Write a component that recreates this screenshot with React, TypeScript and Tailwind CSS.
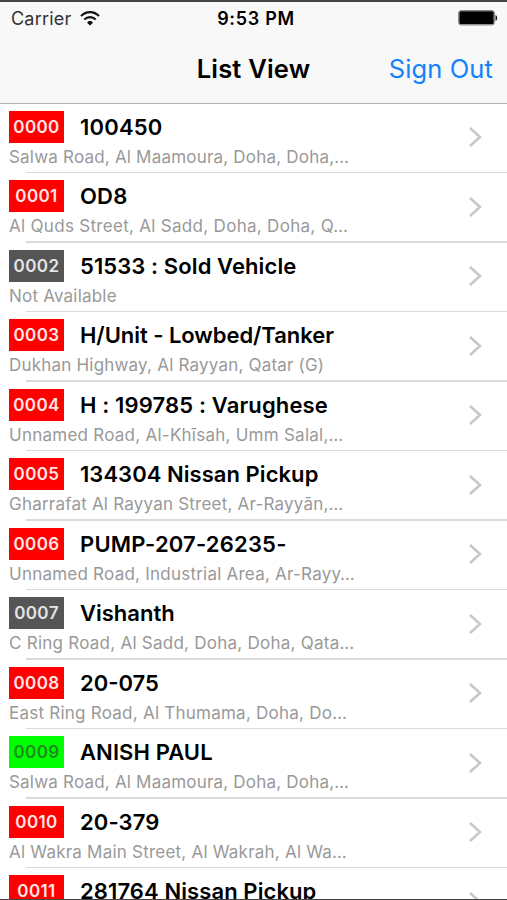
type Row = {
  code: string;
  color: string;
  title: string;
  titleTracking: string;
  place: string;
  placeTracking: string;
};

const RED = "bg-[#ff0000] text-[#ffe6e6]";
const GRAY = "bg-[#555555] text-[#e4e4e4]";
const GREEN = "bg-[#00ff00] text-[#1f8a1f]";

const rows: Row[] = [
  { code: "0000", color: RED, title: "100450", titleTracking: "tracking-[0.2px]", place: "Salwa Road, Al Maamoura, Doha, Doha,…", placeTracking: "tracking-[0.2px]" },
  { code: "0001", color: RED, title: "OD8", titleTracking: "tracking-[0.2px]", place: "Al Quds Street, Al Sadd, Doha, Doha, Q…", placeTracking: "tracking-[0.3px]" },
  { code: "0002", color: GRAY, title: "51533 : Sold Vehicle", titleTracking: "tracking-[0.1px]", place: "Not Available", placeTracking: "tracking-[0.2px]" },
  { code: "0003", color: RED, title: "H/Unit - Lowbed/Tanker", titleTracking: "tracking-[-0.04px]", place: "Dukhan Highway, Al Rayyan, Qatar (G)", placeTracking: "tracking-[0.2px]" },
  { code: "0004", color: RED, title: "H : 199785 : Varughese", titleTracking: "tracking-[0.14px]", place: "Unnamed Road, Al-Khīsah, Umm Salal,…", placeTracking: "tracking-[0.25px]" },
  { code: "0005", color: RED, title: "134304 Nissan Pickup", titleTracking: "tracking-[0.05px]", place: "Gharrafat Al Rayyan Street, Ar-Rayyān,…", placeTracking: "tracking-[0.21px]" },
  { code: "0006", color: RED, title: "PUMP-207-26235-", titleTracking: "tracking-[0.2px]", place: "Unnamed Road, Industrial Area, Ar-Rayy…", placeTracking: "tracking-[0.23px]" },
  { code: "0007", color: GRAY, title: "Vishanth", titleTracking: "tracking-normal", place: "C Ring Road, Al Sadd, Doha, Doha, Qata…", placeTracking: "tracking-[0.25px]" },
  { code: "0008", color: RED, title: "20-075", titleTracking: "tracking-normal", place: "East Ring Road, Al Thumama, Doha, Do…", placeTracking: "tracking-[0.24px]" },
  { code: "0009", color: GREEN, title: "ANISH PAUL", titleTracking: "tracking-[0.1px]", place: "Salwa Road, Al Maamoura, Doha, Doha,…", placeTracking: "tracking-[0.2px]" },
  { code: "0010", color: RED, title: "20-379", titleTracking: "tracking-[0.1px]", place: "Al Wakra Main Street, Al Wakrah, Al Wa…", placeTracking: "tracking-[0.22px]" },
  { code: "0011", color: RED, title: "281764 Nissan Pickup", titleTracking: "tracking-[0.1px]", place: "", placeTracking: "tracking-normal" },
];

function WifiIcon() {
  return (
    <svg className="h-[15px] w-[20px]" viewBox="0 0 20 15" fill="none" stroke="#111" strokeWidth="2.1">
      <path d="M1 5C6 -0.2 14 -0.2 19 5" />
      <path d="M4.3 8.6C7.6 5.3 12.4 5.3 15.7 8.6" />
      <path d="M10 14.4L7.3 11.9C7.3 9.3 12.7 9.3 12.7 11.9Z" fill="#111" stroke="none" />
    </svg>
  );
}

function BatteryIcon() {
  return (
    <svg className="h-[16px] w-[40px]" viewBox="0 0 40 16">
      <rect x="0.5" y="0.5" width="36" height="14.5" rx="2.5" fill="#f8f8f8" stroke="#8a8a8a" />
      <rect x="1.3" y="1.3" width="34.4" height="13" rx="1.5" fill="#000" />
      <path d="M37.5 5C39.7 6 39.7 10 37.5 11Z" fill="#111" />
    </svg>
  );
}

function Chevron() {
  return (
    <svg className="h-[20px] w-[13px]" viewBox="0 0 13 20" fill="none" stroke="#c7c7cc" strokeWidth="2.6">
      <path d="M1 1L11 10L1 19" />
    </svg>
  );
}

function ListRow({ row }: { row: Row }) {
  return (
    <li className="flex h-[69.5px] shrink-0 flex-col">
      <div className="flex min-h-0 flex-1 justify-between pr-[25px] pl-[9px]">
        <div className="flex flex-col pt-[7px]">
          <div className="flex items-center gap-4">
            <span className={`flex h-8 w-[55px] items-center justify-center pt-[2px] text-[17px] font-semibold tracking-[0.4px] ${row.color}`}>
              {row.code}
            </span>
            <span className={`text-[22px] leading-8 font-semibold whitespace-nowrap text-black ${row.titleTracking}`}>{row.title}</span>
          </div>
          <span className={`mt-[3px] text-[17px] leading-[22px] whitespace-nowrap text-[#999999] ${row.placeTracking}`}>{row.place}</span>
        </div>
        <div className="flex pt-[23.5px]">
          <Chevron />
        </div>
      </div>
      <div className="ml-[26px] h-[1.5px] shrink-0 bg-[#dadadc]" />
    </li>
  );
}

export default function App() {
  return (
    <div className="flex h-[900px] w-[507px] flex-col overflow-hidden border-t-2 border-b border-[#444444] bg-white font-['Inter',sans-serif]">
      <header className="flex h-[102px] shrink-0 flex-col border-b border-[#b4b4b6] bg-[#f8f8f8]">
        <div className="grid h-[33px] grid-cols-3 items-center pr-[9px] pl-[11px]">
          <div className="flex items-center gap-[9px]">
            <span className="text-[18px] tracking-[0.2px] text-[#333]">Carrier</span>
            <WifiIcon />
          </div>
          <span className="pl-[3px] text-center text-[18px] font-semibold tracking-[0.7px] whitespace-nowrap text-black">9:53 PM</span>
          <div className="flex justify-end">
            <BatteryIcon />
          </div>
        </div>
        <div className="grid h-[69px] grid-cols-3 items-center pr-[14px] pl-[14px]">
          <span />
          <h1 className="text-center text-[25.5px] font-semibold tracking-[0.2px] whitespace-nowrap text-black">List View</h1>
          <span className="text-right text-[25.5px] tracking-[0.1px] whitespace-nowrap text-[#1482fa]">Sign Out</span>
        </div>
      </header>
      <ul className="-mt-[0.5px] flex min-h-0 flex-1 flex-col">
        {rows.map((row) => (
          <ListRow key={row.code} row={row} />
        ))}
      </ul>
    </div>
  );
}
